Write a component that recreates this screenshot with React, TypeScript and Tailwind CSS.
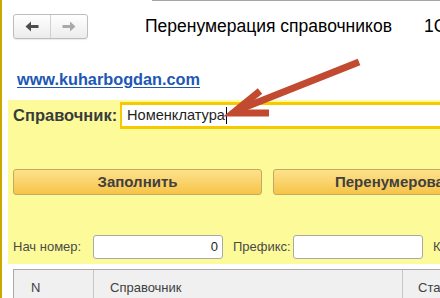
export default function App() {
  return (
    <div className="relative w-[440px] h-[298px] overflow-hidden bg-white border-l-2 border-[#c9a900] font-['Liberation_Sans',Arial,sans-serif]">
      <div className="ml-[150px] h-px bg-[#a6a6a6]" />

      {/* header */}
      <div className="flex items-center mt-[13px] h-[25px]">
        <div className="ml-[11px] flex h-[25px] w-[75px] shrink-0 rounded-[3px] border border-[#bdbdbd] bg-gradient-to-b from-white to-[#ececec] shadow-[0_1px_1px_rgba(0,0,0,0.08)]">
          <div className="flex w-[37px] items-center justify-center border-r border-[#d0d0d0]">
            <svg width="14" height="11" viewBox="0 0 14 11">
              <path d="M0.5 5.5 L6 0.5 V4 H13.5 V7 H6 V10.5 Z" fill="#4d4d4d" />
            </svg>
          </div>
          <div className="flex flex-1 items-center justify-center">
            <svg width="14" height="11" viewBox="0 0 14 11">
              <path d="M13.5 5.5 L8 0.5 V4 H0.5 V7 H8 V10.5 Z" fill="#a9a9a9" />
            </svg>
          </div>
        </div>
        <div className="ml-[57px] flex shrink-0 whitespace-nowrap text-[17.5px] text-black">
          <span>Перенумерация справочников</span>
          <span className="ml-[32px]">1С</span>
        </div>
      </div>

      {/* link */}
      <div className="mt-[28px] ml-[15px] h-[20px]">
        <span className="text-[16.3px] font-bold text-[#2057b5] underline underline-offset-2">www.kuharbogdan.com</span>
      </div>

      {/* yellow panel */}
      <div className="mt-[13px] ml-[6px] h-[164px] bg-[#fdfb99]">
        <div className="flex items-center pt-[2px]">
          <span className="ml-[5px] w-[107px] shrink-0 text-[16.5px] font-bold text-[#3b3b3b]">Справочник:</span>
          <div className="flex h-[27px] flex-1 items-center border-y-[3px] border-l-[2px] border-[#f7c900] bg-white pl-[5px]">
            <span className="text-[14.6px] text-[#1f1f1f]">Номенклатура</span>
            <span className="ml-px h-[17px] w-px bg-black" />
          </div>
        </div>

        <div className="mt-[40px] flex">
          <div className="ml-[5px] flex h-[26px] w-[249px] shrink-0 items-center justify-center rounded-[3px] border border-[#c6a860] bg-gradient-to-b from-[#fde28a] to-[#f6c446] text-[15px] font-bold text-[#404040]">
            Заполнить
          </div>
          <div className="ml-[11px] flex h-[26px] w-[180px] shrink-0 items-center rounded-[3px] border border-[#c6a860] bg-gradient-to-b from-[#fde28a] to-[#f6c446] pl-[61px] text-[15px] font-bold text-[#404040] whitespace-nowrap">
            Перенумеровать
          </div>
        </div>

        <div className="mt-[40px] flex items-center text-[13px] text-[#4a4a4a]">
          <span className="ml-[5px] w-[80px] shrink-0">Нач номер:</span>
          <div className="flex h-[24px] w-[130px] shrink-0 items-center justify-end rounded-[3px] border border-[#a9a9a9] bg-white pr-[4px] text-[#1f1f1f]">
            0
          </div>
          <span className="ml-[10px] w-[60px] shrink-0">Префикс:</span>
          <div className="h-[24px] w-[130px] shrink-0 rounded-[3px] border border-[#a9a9a9] bg-white" />
          <span className="ml-[10px] shrink-0">К</span>
        </div>
      </div>

      {/* table header */}
      <div className="mt-[5px] ml-[11px] flex h-[40px] w-[460px] border border-[#a9a9a9] bg-[#f0f0f0] text-[13px] text-[#404040]">
        <div className="w-[80px] shrink-0 border-r border-[#c6c6c6] pl-[17px] pt-[8px]">N</div>
        <div className="w-[309px] shrink-0 border-r border-[#c6c6c6] pl-[16px] pt-[8px]">Справочник</div>
        <div className="shrink-0 pl-[15px] pt-[8px] whitespace-nowrap">Статус</div>
      </div>

      {/* red arrow annotation */}
      <svg className="absolute left-0 top-0" width="440" height="298" viewBox="0 0 440 298">
        <g fill="none" stroke="#c24a30" strokeWidth="7" strokeLinecap="butt" strokeLinejoin="miter">
          <path d="M357 62 L236 110" />
          <path d="M258 91 L231 113 L267 113" />
        </g>
      </svg>
    </div>
  );
}
